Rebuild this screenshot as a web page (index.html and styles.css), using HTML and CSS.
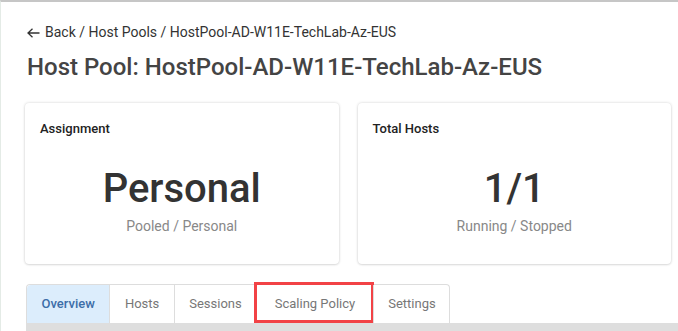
FILE: index.html
```html
<!DOCTYPE html>
<html lang="en">
<head>
    <meta charset="UTF-8">
    <title>Host Pool: HostPool-AD-W11E-TechLab-Az-EUS</title>
    <link rel="stylesheet" href="styles.css">
</head>
<body>
    <div class="page">
        <!-- Breadcrumb -->
        <nav class="breadcrumb">
            <svg class="arrow" width="13" height="10" viewBox="0 0 13 10" fill="none" stroke="#333" stroke-width="1.3">
                <path d="M12.5 5H1M5.5 0.8L1 5l4.5 4.2"/>
            </svg>
            <span>Back / Host Pools / HostPool-AD-W11E-TechLab-Az-EUS</span>
        </nav>

        <h1 class="page-title">Host Pool: HostPool-AD-W11E-TechLab-Az-EUS</h1>

        <div class="cards">
            <div class="stat-card">
                <h3 class="stat-label">Assignment</h3>
                <div class="stat-value">Personal</div>
                <div class="stat-sub">Pooled / Personal</div>
            </div>
            <div class="stat-card">
                <h3 class="stat-label">Total Hosts</h3>
                <div class="stat-value">1/1</div>
                <div class="stat-sub">Running / Stopped</div>
            </div>
        </div>

        <div class="tabs-row">
            <ul class="tabs">
                <li class="tab active">Overview</li>
                <li class="tab">Hosts</li>
                <li class="tab">Sessions</li>
                <li class="tab highlight">Scaling Policy</li>
                <li class="tab">Settings</li>
            </ul>
        </div>
        <div class="tab-bar"></div>
    </div>
</body>
</html>
```

FILE: styles.css
```css
:root {
    --texto: #333333;
    --titulo: #444444;
    --gris: #888888;
    --borde: #dddddd;
    --activo-fondo: #dcedfc;
    --activo-texto: #3c6ea8;
    --rojo: #f24246;
}

html, body {
    margin: 0;
    padding: 0;
    height: 100%;
    overflow: hidden;
}

body {
    font-family: Roboto, 'Liberation Sans', sans-serif;
    background: #ffffff;
    color: var(--texto);
    border-top: 2px solid #c6c6c6;
    border-left: 1px solid #e4ebe6;
    box-sizing: border-box;
}

.page {
    padding: 20px 0 0 24px;
}

.breadcrumb {
    display: flex;
    align-items: center;
    gap: 5px;
    font-size: 14px;
    line-height: 20px;
    color: var(--texto);
    padding-left: 2px;
}

.arrow {
    margin-top: 1px;
}

.page-title {
    margin: 9px 0 0 2px;
    font-size: 24px;
    font-weight: 500;
    line-height: 32px;
    color: var(--titulo);
}

.cards {
    display: flex;
    gap: 19px;
    margin-top: 20px;
    padding-right: 7px;
}

.stat-card {
    width: 314px;
    height: 161px;
    box-sizing: border-box;
    background: #ffffff;
    border-radius: 4px;
    box-shadow: 0 0 3px rgba(0, 0, 0, 0.18), 0 1px 2px rgba(0, 0, 0, 0.08);
    padding: 18px 15px 0 15px;
    text-align: center;
}

.stat-label {
    margin: 0;
    font-size: 13px;
    font-weight: 500;
    line-height: 16px;
    color: #222222;
    text-align: left;
}

.stat-value {
    margin-top: 28px;
    font-size: 40px;
    line-height: 48px;
    font-weight: 500;
    color: #333333;
}

.stat-sub {
    margin-top: 5px;
    font-size: 14px;
    color: var(--gris);
}

.tabs-row {
    margin-top: 20px;
    padding-left: 1px;
}

.tabs {
    list-style: none;
    margin: 0;
    padding: 0;
    display: inline-flex;
    border: 1px solid var(--borde);
    border-bottom: none;
    border-radius: 4px 4px 0 0;
}

.tab {
    position: relative;
    height: 38px;
    line-height: 38px;
    padding: 0 14.5px;
    font-size: 13px;
    color: #777777;
    border-left: 1px solid var(--borde);
}

.tab:first-child {
    border-left: none;
    border-radius: 4px 0 0 0;
}

.tab.active {
    background: var(--activo-fondo);
    color: var(--activo-texto);
    font-weight: 500;
}

.tab.highlight {
    padding: 0 17.5px;
}

.tab:last-child {
    padding-right: 13px;
}

/* recuadro rojo alrededor de Scaling Policy */
.tab.highlight::after {
    content: "";
    position: absolute;
    left: -3px;
    top: -3px;
    right: -1px;
    bottom: 0;
    border: 3px solid var(--rojo);
}

.tab-bar {
    height: 8px;
    background: #dedede;
    margin-left: 1px;
}
```
